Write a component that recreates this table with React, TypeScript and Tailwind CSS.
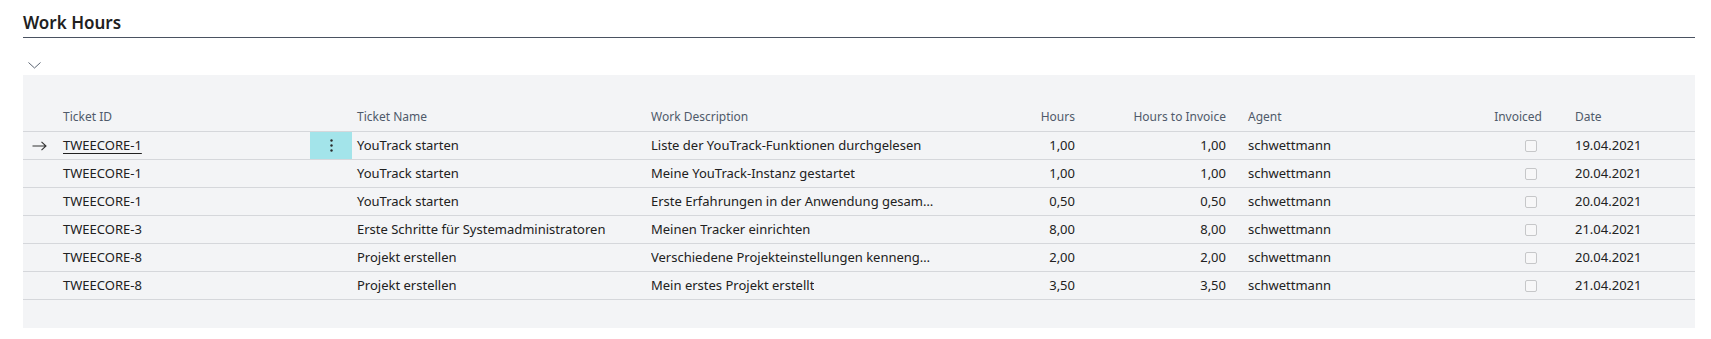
import React from 'react';

type Row = {
  id: string;
  name: string;
  desc: string;
  hours: string;
  toInvoice: string;
  agent: string;
  date: string;
};

const rows: Row[] = [
  { id: 'TWEECORE-1', name: 'YouTrack starten', desc: 'Liste der YouTrack-Funktionen durchgelesen', hours: '1,00', toInvoice: '1,00', agent: 'schwettmann', date: '19.04.2021' },
  { id: 'TWEECORE-1', name: 'YouTrack starten', desc: 'Meine YouTrack-Instanz gestartet', hours: '1,00', toInvoice: '1,00', agent: 'schwettmann', date: '20.04.2021' },
  { id: 'TWEECORE-1', name: 'YouTrack starten', desc: 'Erste Erfahrungen in der Anwendung gesammelt', hours: '0,50', toInvoice: '0,50', agent: 'schwettmann', date: '20.04.2021' },
  { id: 'TWEECORE-3', name: 'Erste Schritte für Systemadministratoren', desc: 'Meinen Tracker einrichten', hours: '8,00', toInvoice: '8,00', agent: 'schwettmann', date: '21.04.2021' },
  { id: 'TWEECORE-8', name: 'Projekt erstellen', desc: 'Verschiedene Projekteinstellungen kennengelernt', hours: '2,00', toInvoice: '2,00', agent: 'schwettmann', date: '20.04.2021' },
  { id: 'TWEECORE-8', name: 'Projekt erstellen', desc: 'Mein erstes Projekt erstellt', hours: '3,50', toInvoice: '3,50', agent: 'schwettmann', date: '21.04.2021' },
];

const font = { fontFamily: '"Noto Sans", "Open Sans", Arial, sans-serif' };

const ArrowRight = () => (
  <svg width="15" height="10" viewBox="0 0 15 10" fill="none" stroke="#333" strokeWidth="1.1">
    <path d="M0.5 5H14M9.5 0.8L14 5L9.5 9.2" />
  </svg>
);

const Chevron = () => (
  <svg width="13" height="7" viewBox="0 0 13 7" fill="none" stroke="#5b6573" strokeWidth="1">
    <path d="M0.5 0.5L6.5 6L12.5 0.5" />
  </svg>
);

const Checkbox = () => (
  <span className="inline-block w-[12px] h-[12px] rounded-[2px] border border-[#c6c7c9] bg-[#f7f7f8]" />
);

export default function App() {
  return (
    <div className="w-[1711px] h-[339px] bg-white text-[#212121]" style={font}>
      <div className="pl-[23px] pr-[16px] pt-[11px]">
        {/* Title */}
        <h1 className="text-[17px] font-semibold leading-[24px] pb-[2px] border-b border-[#4a5261]">
          Work Hours
        </h1>

        {/* Collapse toggle */}
        <div className="h-[37px] flex items-end pb-[6px] pl-[5px]">
          <Chevron />
        </div>

        {/* Grid */}
        <div className="bg-[#f3f4f6] pb-[28px]">
          {/* Header */}
          <div className="flex h-[57px] items-end pb-[5px] border-b border-[#d5d7db] text-[12px] text-[#4f5a6a]">
            <div className="w-[32px]" />
            <div className="w-[255px] pl-[8px]">Ticket ID</div>
            <div className="w-[42px]" />
            <div className="w-[294px] pl-[5px]">Ticket Name</div>
            <div className="w-[294px] pl-[5px]">Work Description</div>
            <div className="w-[140px] pr-[5px] text-right">Hours</div>
            <div className="w-[151px] pr-[5px] text-right">Hours to Invoice</div>
            <div className="w-[249px] pl-[17px]">Agent</div>
            <div className="w-[67px] pr-[5px] text-right">Invoiced</div>
            <div className="flex-1 pl-[28px]">Date</div>
          </div>

          {/* Rows */}
          {rows.map((r, i) => (
            <div key={i} className="flex h-[28px] items-stretch border-b border-[#d5d7db] text-[13px]">
              <div className="w-[32px] flex items-center justify-center">
                {i === 0 && <ArrowRight />}
              </div>
              <div className="w-[255px] pl-[8px] flex items-center">
                <span className={i === 0 ? 'underline underline-offset-[3px]' : ''}>{r.id}</span>
              </div>
              <div className={`w-[42px] flex items-center justify-center ${i === 0 ? 'bg-[#a3e4ea]' : ''}`}>
                {i === 0 && (
                  <svg width="3" height="13" viewBox="0 0 3 13" fill="#2b2b2b">
                    <circle cx="1.5" cy="1.5" r="1.2" />
                    <circle cx="1.5" cy="6.5" r="1.2" />
                    <circle cx="1.5" cy="11.5" r="1.2" />
                  </svg>
                )}
              </div>
              <div className="w-[294px] pl-[5px] flex items-center">{r.name}</div>
              <div className="w-[294px] pl-[5px] pr-[6px] flex items-center min-w-0">
                <span className="truncate">{r.desc}</span>
              </div>
              <div className="w-[140px] pr-[5px] flex items-center justify-end">{r.hours}</div>
              <div className="w-[151px] pr-[5px] flex items-center justify-end">{r.toInvoice}</div>
              <div className="w-[249px] pl-[17px] flex items-center">{r.agent}</div>
              <div className="w-[67px] pr-[10px] flex items-center justify-end">
                <Checkbox />
              </div>
              <div className="flex-1 pl-[28px] flex items-center">{r.date}</div>
            </div>
          ))}
        </div>
      </div>
    </div>
  );
}
